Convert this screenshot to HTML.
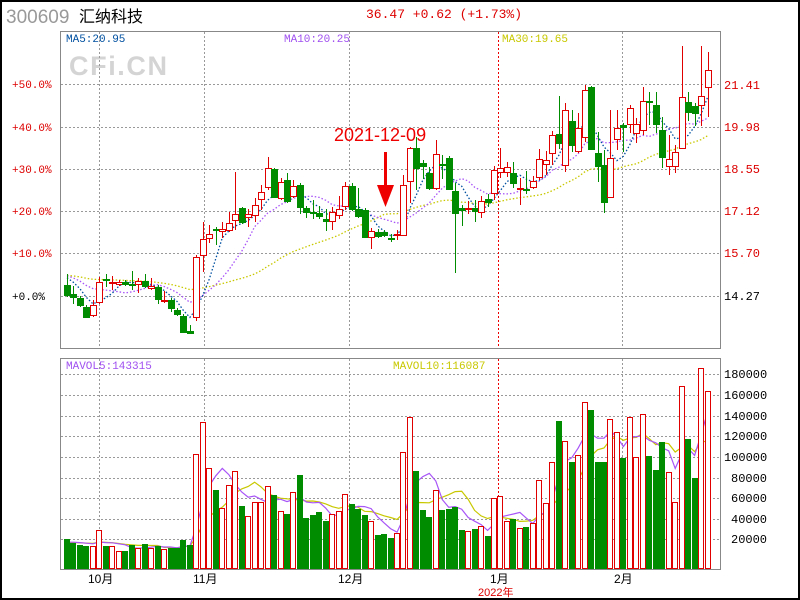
<!DOCTYPE html>
<html><head><meta charset="utf-8"><style>
html,body{margin:0;padding:0;background:#fff;}
svg{display:block;font-family:"Liberation Mono","Noto Sans CJK SC",monospace;}
</style></head><body>
<svg id="s" width="800" height="600" xmlns="http://www.w3.org/2000/svg">
<rect x="1" y="1" width="798" height="598" fill="#fff" stroke="#000" stroke-width="2"/>
<text x="6" y="23" font-family="Liberation Sans, sans-serif" font-size="19" fill="#999">300609</text>
<text x="79" y="22" font-family="Liberation Sans, Noto Sans CJK SC, sans-serif" font-size="16" fill="#000">汇纳科技</text>
<text x="366" y="18" font-size="13" fill="#d00">36.47 +0.62 (+1.73%)</text>
<text x="69" y="75" font-family="Liberation Sans, sans-serif" font-weight="bold" font-size="27" textLength="98" fill="#d4d4d4">CFi.CN</text>
<g id="grid"></g>
<rect x="60.5" y="31.5" width="660" height="317" fill="none" stroke="#888"/>
<rect x="60.5" y="358.5" width="660" height="211" fill="none" stroke="#888"/>
<text x="66" y="42" font-size="11" fill="#0050a0">MA5:20.95</text>
<text x="284" y="42" font-size="11" fill="#a050f0">MA10:20.25</text>
<text x="502" y="42" font-size="11" fill="#c8c800">MA30:19.65</text>
<text x="66" y="369" font-size="11" fill="#a050f0">MAVOL5:143315</text>
<text x="393" y="369" font-size="11" fill="#c8c800">MAVOL10:116087</text>
<g font-size="11" fill="#d00">
<text x="12" y="88">+50.0%</text><text x="12" y="131">+40.0%</text><text x="12" y="173">+30.0%</text>
<text x="12" y="215">+20.0%</text><text x="12" y="257">+10.0%</text><text x="12" y="300" fill="#000">+0.0%</text>
</g>
<g font-size="12" fill="#d00">
<text x="724" y="89">21.41</text><text x="724" y="131">19.98</text><text x="724" y="173">18.55</text>
<text x="724" y="215">17.12</text><text x="724" y="257">15.70</text><text x="724" y="300" fill="#000">14.27</text>
</g>
<g font-size="12" fill="#000">
<text x="724" y="378">180000</text><text x="724" y="399">160000</text><text x="724" y="420">140000</text>
<text x="724" y="440">120000</text><text x="724" y="461">100000</text><text x="731" y="482">80000</text>
<text x="731" y="502">60000</text><text x="731" y="523">40000</text><text x="731" y="543">20000</text>
</g>
<g font-size="12" fill="#000" font-family="Liberation Sans, Noto Sans CJK SC, sans-serif">
<text x="88" y="583">10月</text><text x="193" y="583">11月</text><text x="338" y="583">12月</text>
<text x="490" y="583">1月</text><text x="614" y="583">2月</text>
<text x="478" y="596" fill="#d00" font-size="11">2022年</text>
</g>
<g id="ma"></g>
<g id="c"></g>
<text x="334" y="141" font-size="18" fill="#e00" font-family="Liberation Sans, sans-serif">2021-12-09</text>
<rect x="384" y="152" width="3" height="34" fill="#e00"/>
<polygon points="377,185 394,185 385.5,207" fill="#e00"/>
</svg>
<script>
var NS="http://www.w3.org/2000/svg";
function el(p,t,a){var e=document.createElementNS(NS,t);for(var k in a)e.setAttribute(k,a[k]);p.appendChild(e);return e;}
var G=document.getElementById('grid');
[84,127,169,211,253,296].forEach(function(y){el(G,'line',{x1:61,x2:720,y1:y+.5,y2:y+.5,stroke:'#999','stroke-dasharray':'2 2'});});
[374,395,416,436,457,478,498,519,539].forEach(function(y){el(G,'line',{x1:61,x2:720,y1:y+.5,y2:y+.5,stroke:'#999','stroke-dasharray':'2 2'});});
[99,204,349,622].forEach(function(x){
 el(G,'line',{x1:x+.5,x2:x+.5,y1:32,y2:348,stroke:'#999','stroke-dasharray':'2 2'});
 el(G,'line',{x1:x+.5,x2:x+.5,y1:359,y2:569,stroke:'#999','stroke-dasharray':'2 2'});});
el(G,'line',{x1:498.5,x2:498.5,y1:32,y2:348,stroke:'#e00','stroke-dasharray':'2 2'});
el(G,'line',{x1:498.5,x2:498.5,y1:359,y2:569,stroke:'#e00','stroke-dasharray':'2 2'});
var D=[[285,295,0,274,297],[294,297,0,286,304],[298,305,0,296,307],[307,317,0,305,318],[305,315,1,300,317],[282,302,1,277,304],[279,280,0,274,287],[282,283,1,276,290],[282,284,1,280,286],[282,284,0,280,286],[284,285,0,271,290],[281,284,1,278,293],[281,286,0,274,288],[286,288,1,278,290],[287,299,0,285,304],[300,301,1,291,303],[300,308,0,298,312],[310,314,0,308,316],[316,332,0,314,333],[331,333,0,325,334],[257,317,1,255,321],[239,255,1,222,272],[234,238,1,225,243],[229,230,0,227,245],[229,231,1,222,238],[223,230,1,212,232],[214,220,1,172,230],[208,222,0,207,224],[214,217,1,209,227],[205,215,1,198,222],[192,199,1,185,210],[168,187,1,157,190],[169,197,0,168,198],[182,198,1,178,200],[180,201,0,173,203],[186,196,1,180,198],[185,207,0,183,214],[208,212,0,206,218],[212,213,0,200,219],[213,216,0,206,219],[219,221,0,209,231],[212,221,1,207,230],[209,215,1,196,219],[186,206,1,182,210],[186,209,0,183,211],[209,216,0,188,218],[210,237,0,208,238],[231,237,1,228,249],[232,236,0,229,238],[232,235,0,230,237],[238,239,0,234,242],[234,235,1,230,240],[185,235,1,175,236],[148,181,1,147,203],[148,168,0,137,190],[163,166,0,160,179],[173,188,0,167,190],[154,188,1,140,190],[164,165,0,155,179],[158,189,0,156,190],[191,213,0,183,273],[208,210,0,205,226],[208,209,1,201,214],[208,211,0,200,222],[201,212,1,196,218],[199,202,0,194,207],[170,193,1,166,200],[168,172,1,148,178],[167,172,1,162,177],[173,183,0,162,188],[188,189,1,178,205],[189,190,0,171,194],[181,187,1,176,189],[159,177,1,149,180],[160,164,1,151,175],[135,153,1,131,165],[134,143,0,96,149],[110,165,1,103,172],[121,145,0,110,152],[128,151,1,113,153],[90,137,1,85,142],[87,149,0,86,150],[153,166,0,132,182],[165,202,0,150,213],[158,197,1,110,183],[128,139,1,110,150],[125,127,0,123,152],[108,124,1,105,133],[124,133,1,118,143],[101,130,1,87,135],[101,102,0,92,125],[105,124,0,92,133],[130,157,0,117,168],[159,166,1,135,175],[152,166,1,145,173],[97,148,1,46,149],[102,112,0,92,121],[106,113,0,103,126],[96,105,1,46,126],[70,87,1,52,117]];
var V=[[539,0],[543,0],[545,0],[546,0],[546,1],[530,1],[546,0],[546,1],[551,1],[551,0],[545,0],[548,1],[544,0],[548,1],[546,0],[549,1],[548,0],[548,0],[540,0],[545,0],[454,1],[422,1],[468,1],[490,0],[508,1],[485,1],[471,1],[506,0],[516,1],[502,1],[502,1],[486,1],[495,0],[511,1],[514,0],[492,1],[475,0],[518,0],[515,0],[512,0],[521,0],[514,1],[511,1],[494,1],[504,0],[509,0],[515,0],[521,1],[535,0],[534,0],
[538,0],[533,1],[452,1],[417,1],[471,0],[510,0],[517,0],[490,1],[510,0],[509,0],[507,0],[530,0],[531,1],[529,0],[526,1],[536,0],[498,1],[496,1],[521,1],[519,0],[528,1],[527,0],[523,1],[480,1],[503,1],[462,1],[421,0],[441,1],[462,0],[455,1],[402,1],[410,0],[462,0],[462,0],[419,1],[432,1],[458,0],[417,1],[457,1],[414,1],[456,0],[470,0],[442,0],[472,1],[502,1],[386,1],[439,0],[478,0],[368,1],[391,1]];
var C=document.getElementById('c'),M=document.getElementById('ma');
function X(i){return 67+i*6.47;}
var RED='#e00000',GRN='#008c00';
D.forEach(function(d,i){var x=Math.round(X(i));var col=d[2]?RED:GRN;
 el(C,'line',{x1:x+.5,x2:x+.5,y1:d[3],y2:d[4],stroke:col});
 var h=Math.max(d[1]-d[0],1);
 if(d[2]) el(C,'rect',{x:x-2.5,y:d[0]+.5,width:6,height:h,fill:'#fff',stroke:col});
 else el(C,'rect',{x:x-3,y:d[0],width:7,height:h+1,fill:col});
});
V.forEach(function(v,i){var x=Math.round(X(i));
 if(v[1]) el(C,'rect',{x:x-2.5,y:v[0]+.5,width:5,height:568-v[0],fill:'#fff',stroke:RED});
 else el(C,'rect',{x:x-3,y:v[0],width:6,height:569-v[0],fill:GRN});
});
var cl=D.map(function(d){return d[2]?d[0]:d[1];});
var pre=[];for(var k=0;k<29;k++)pre.push(276-k*0.1);
var all=pre.concat(cl);
function ma(arr,n,off){var out=[];for(var i=0;i<arr.length-off;i++){var s=0;for(var j=0;j<n;j++)s+=arr[i+off-j];out.push(s/n);}return out;}
function line(vals,col,dash,w){var p=vals.map(function(v,i){return X(i).toFixed(1)+','+v.toFixed(1);}).join(' ');
 var a={points:p,fill:'none',stroke:col,'stroke-width':w||1.3};if(dash)a['stroke-dasharray']=dash;el(M,'polyline',a);}
line(ma(all,30,29),'#c8c800','1.5 2');
line(ma(all,10,29),'#a855f7','1.5 2');
line(ma(all,5,29),'#0050a0','1.5 2');
var vh=V.map(function(v){return 568-v[0];});
var vpre=[];for(k=0;k<9;k++)vpre.push(25);
var va=vpre.concat(vh);
line(ma(va,10,9).map(function(h){return 568-h;}),'#c8c800',null,1.2);
line(ma(va,5,9).map(function(h){return 568-h;}),'#a855f7',null,1.2);
</script>
</body></html>
